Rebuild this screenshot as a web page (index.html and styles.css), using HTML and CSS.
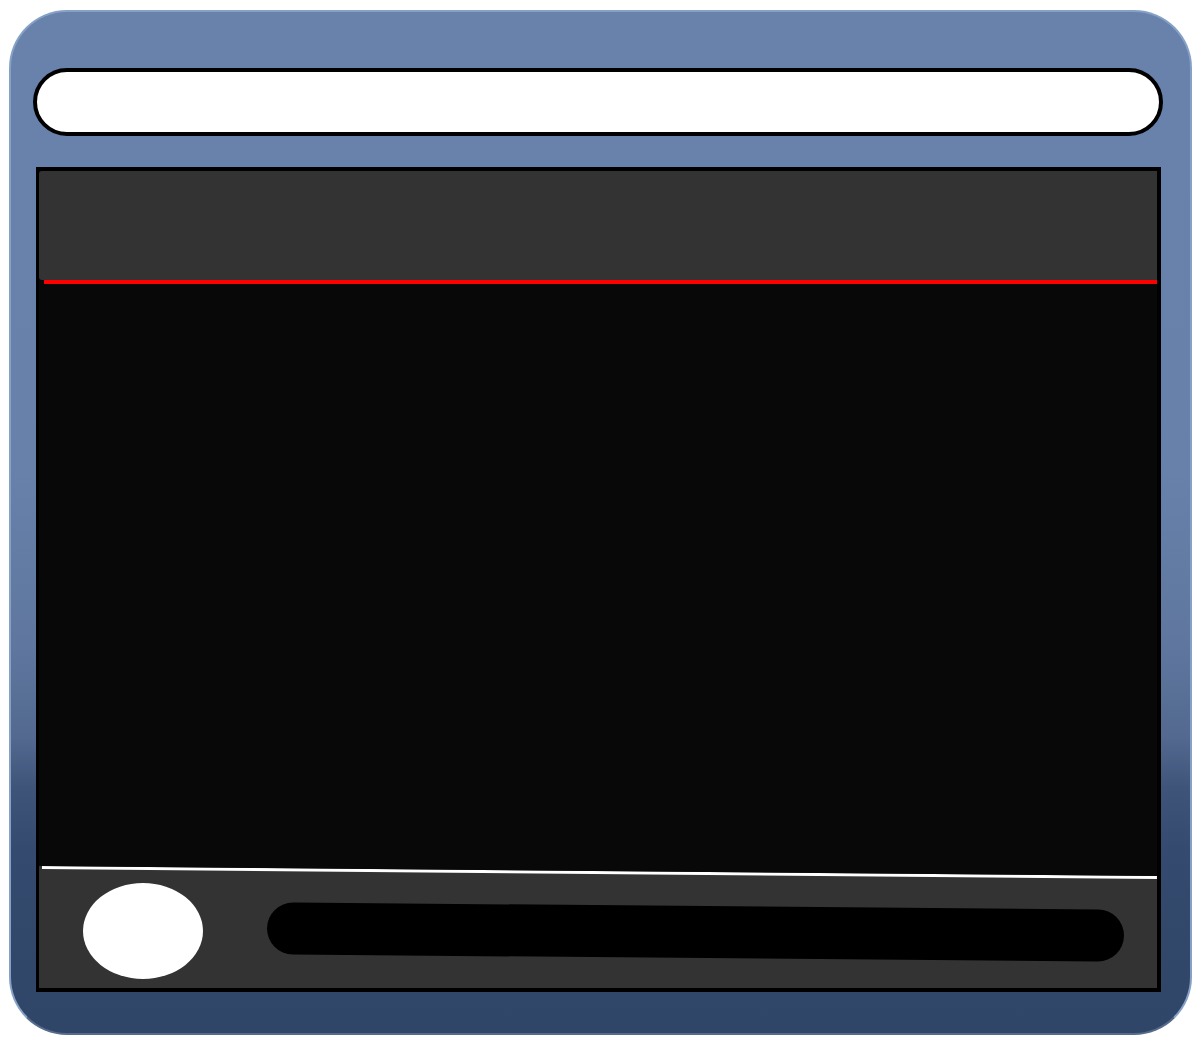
FILE: index.html
```html
<!DOCTYPE html>
<html lang="en">
<head>
<meta charset="utf-8">
<title>Player</title>
<link rel="stylesheet" href="styles.css">
</head>
<body>
<div class="frame">
  <div class="address-bar"></div>
  <div class="panel">
    <div class="panel-header"></div>
    <div class="accent-line"></div>
    <div class="panel-main"></div>
    <div class="panel-footer">
      <div class="footer-button"></div>
      <div class="footer-track"></div>
    </div>
  </div>
</div>
</body>
</html>
```

FILE: styles.css
```css
html, body {
  margin: 0;
  padding: 0;
  background: #ffffff;
  font-family: "Liberation Sans", Arial, sans-serif;
}

.frame {
  box-sizing: border-box;
  width: 1183px;
  height: 1025px;
  margin: 10px 0 0 9px;
  padding: 56px 27px 41px 22px;
  border: 2px solid #86a1c6;
  border-bottom-color: #566a8a;
  border-radius: 58px;
  background: linear-gradient(180deg,
    #6882ac 0%,
    #6781aa 45%,
    #5f779f 62%,
    #53698f 71%,
    #3e5479 76%,
    #344a6e 82%,
    #304668 100%);
  display: flex;
  flex-direction: column;
  gap: 31px;
}

.address-bar {
  box-sizing: border-box;
  height: 68px;
  flex: none;
  background: #ffffff;
  border: 4px solid #000000;
  border-radius: 34px;
}

.panel {
  flex: 1;
  margin: 0 2px 0 3px;
  border: 3px solid #000000;
  border-top-width: 4px;
  border-right-width: 4px;
  border-bottom-width: 4px;
  background: #080808;
  display: flex;
  flex-direction: column;
}

.panel-header {
  height: 109px;
  flex: none;
  background: #333333;
  border-radius: 3px 0 0 3px;
}

.accent-line {
  height: 4px;
  flex: none;
  margin-left: 5px;
  background: #ff0000;
}

.panel-main {
  flex: 1;
  background: #080808;
}

.panel-footer {
  position: relative;
  height: 122px;
  flex: none;
  background: #333333;
  clip-path: polygon(0 0, 100% 10px, 100% 100%, 0 100%);
  display: flex;
  align-items: center;
  padding: 0 33px 0 44px;
  gap: 64px;
}

.panel-footer::before {
  content: "";
  position: absolute;
  left: 3px;
  right: 0;
  top: 0;
  height: 3px;
  background: #ffffff;
  transform-origin: left top;
  transform: rotate(0.51deg);
}

.footer-button {
  width: 120px;
  height: 96px;
  flex: none;
  border-radius: 50%;
  background: #ffffff;
  margin-top: 7px;
}

.footer-track {
  flex: 1;
  height: 52px;
  margin-top: 10px;
  background: #000000;
  border-radius: 27px;
  transform: rotate(0.5deg);
}
```
